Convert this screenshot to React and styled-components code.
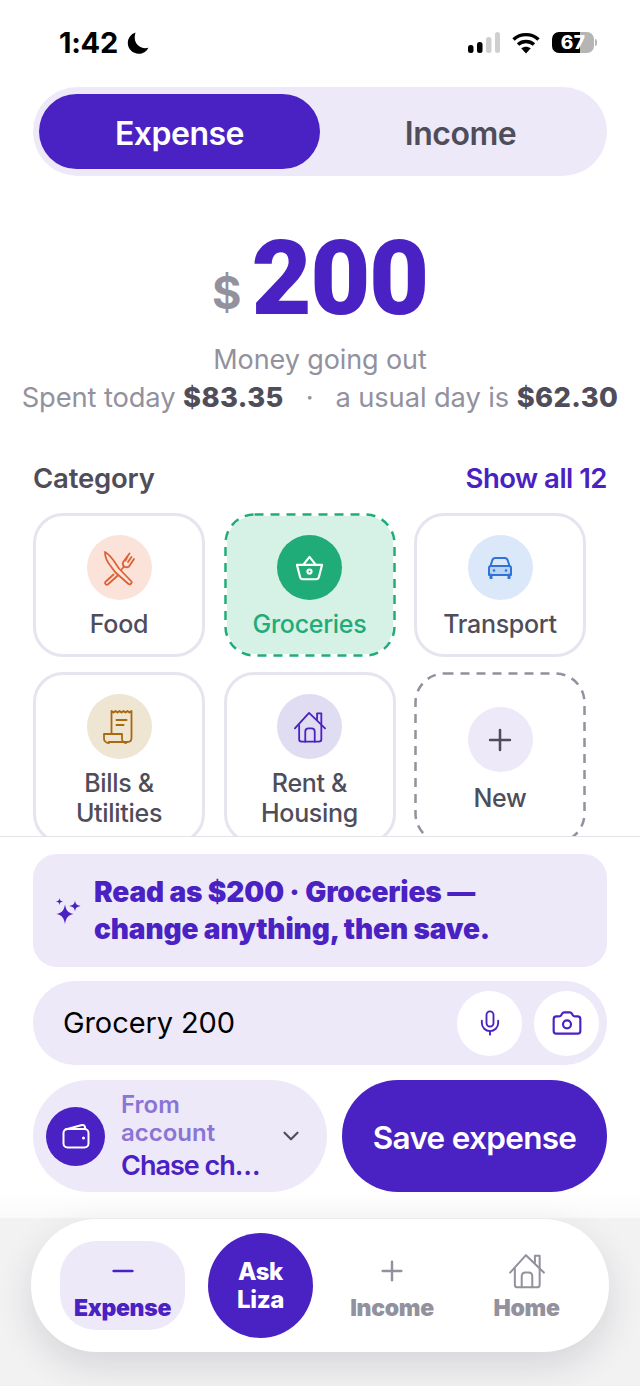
import React from "react";
import styled, { createGlobalStyle } from "styled-components";
import { Mic, Camera, ChevronDown, Plus, Minus } from "lucide-react";

const Global = createGlobalStyle`
  html, body { margin: 0; padding: 0; background: #fff; }
  * { box-sizing: border-box; }
`;
const purple = "#4a21c2";
const lilac = "#eee9f8";
const ink = "#4f4d5a";
const muted = "#92919d";

const Page = styled.div`
  width: 640px; height: 1386px; overflow: hidden; display: flex; flex-direction: column;
  font-family: Inter, "Liberation Sans", sans-serif; background: #fff; color: ${ink};
`;
const StatusBar = styled.div`
  height: 87px; flex: none; display: flex; align-items: center; justify-content: space-between;
  padding: 0 46px 2px 59px; color: #000;
`;
const Clock = styled.div`
  display: flex; align-items: center; gap: 8px; font-size: 29px; font-weight: 700; letter-spacing: -0.3px;
`;
const StatusIcons = styled.div` display: flex; align-items: center; gap: 12px; `;
const Battery = styled.div`
  width: 42px; height: 21px; border-radius: 7px; display: flex; align-items: center; justify-content: center; position: relative;
  background: linear-gradient(90deg, #000 67%, #b5b5b5 67%); color: #fff; font-size: 19px; font-weight: 800; letter-spacing: .5px;
  &::after {
    content: ""; position: absolute; right: -3px; top: 7px; width: 2px; height: 7px; border-radius: 0 2px 2px 0; background: #b5b5b5;
  }
`;
const Main = styled.div` flex: 1; min-height: 0; overflow: hidden; `;
const Segment = styled.div`
  margin: 0 33px; height: 89px; background: ${lilac}; border-radius: 45px; padding: 7px 6px 7px 6px;
  display: grid; grid-template-columns: 281px 1fr;
`;
const SegmentItem = styled.div`
  display: flex; align-items: center; justify-content: center; border-radius: 38px; padding-top: 3px;
  font-size: 32px; font-weight: 600; letter-spacing: -0.5px;
  background: ${p => (p.$active ? purple : "transparent")};
  color: ${p => (p.$active ? "#fff" : ink)};
`;
const Hero = styled.div`
  display: flex; flex-direction: column; align-items: center; margin-top: 45px;
`;
const Amount = styled.div`
  display: flex; align-items: baseline; justify-content: center; gap: 10px; height: 112px; line-height: 112px;
`;
const Currency = styled.span` font-size: 45px; font-weight: 700; color: ${muted}; position: relative; top: -3px; `;
const Digits = styled.span`
  font-family: Roboto, Inter, sans-serif; font-size: 104px; font-weight: 900; color: ${purple}; letter-spacing: -1.5px;
  position: relative; top: 2px;
`;
const Caption = styled.div` margin-top: 9px; font-size: 27px; line-height: 36px; color: ${muted}; letter-spacing: -0.1px; `;
const Stats = styled.div`
  margin-top: 1px; font-size: 27.3px; line-height: 38px; color: ${muted}; white-space: nowrap; letter-spacing: -0.1px;
  b { color: ${ink}; font-weight: 800; letter-spacing: .4px; }
`;
const Dot = styled.span` margin: 0 22px; `;
const SectionHead = styled.div`
  display: flex; justify-content: space-between; align-items: center; margin: 41px 33px 0 33px; height: 40px;
`;
const SectionTitle = styled.div` font-size: 27.5px; font-weight: 600; color: ${ink}; letter-spacing: -0.2px; `;
const ShowAll = styled.div` font-size: 27.5px; font-weight: 600; color: ${purple}; letter-spacing: -0.5px; `;
const Grid = styled.div`
  margin: 15px 0 0 33px; width: 553px; display: grid; grid-template-columns: repeat(3, 172px);
  column-gap: 18.5px; row-gap: 15px; grid-template-rows: 144px 172px;
`;
const Card = styled.div`
  border-radius: 30px; display: flex; flex-direction: column; align-items: center; position: relative;
  padding-top: 19px; text-align: center;
  border: 3px solid ${p => (p.$dashed ? "transparent" : "#e6e5ef")};
  background: ${p => p.$bg || "#fff"};
  background-clip: ${p => (p.$dashed ? "padding-box" : "border-box")};
  ${p => p.$center && "justify-content: flex-start; padding-top: 32px;"}
`;
const DashFrame = styled.svg`
  position: absolute; left: -3px; top: -3px; width: calc(100% + 6px); height: calc(100% + 6px); overflow: visible; pointer-events: none;
`;
const IconCircle = styled.div`
  width: 65px; height: 65px; flex: none; border-radius: 50%; display: flex; align-items: center; justify-content: center;
  background: ${p => p.$bg}; color: ${p => p.$fg};
`;
const CardLabel = styled.div`
  margin-top: ${p => (p.$center ? 11 : 9)}px; font-size: 25px; line-height: 30px; font-weight: 500; letter-spacing: -0.3px;
  color: ${p => p.$color || ink};
`;
const Sheet = styled.div`
  flex: none; height: 382px; border-top: 1px solid #e4e3ea; padding: 17px 33px 0; display: flex; flex-direction: column;
  background: linear-gradient(#fff 92%, #fafafa);
`;
const Hint = styled.div`
  height: 113px; background: ${lilac}; border-radius: 24px; display: flex; align-items: center; gap: 13px; padding: 0 0 0 22px;
`;
const HintText = styled.div` font-size: 28px; line-height: 37px; font-weight: 900; color: ${purple}; letter-spacing: -0.12px; white-space: nowrap; `;
const InputRow = styled.div`
  margin-top: 14px; height: 84px; background: ${lilac}; border-radius: 42px; display: flex; align-items: center;
  padding: 0 8px 0 30px; gap: 12px;
`;
const InputText = styled.div` flex: 1; font-size: 29px; line-height: 34px; color: #000; font-weight: 400; letter-spacing: -0.1px; `;
const RoundBtn = styled.div`
  width: 65px; height: 65px; border-radius: 50%; background: #fff; display: flex; align-items: center; justify-content: center; color: ${purple};
`;
const ActionRow = styled.div` margin-top: 15px; height: 112px; display: flex; gap: 15px; `;
const Account = styled.div`
  width: 294px; flex: none; background: ${lilac}; border-radius: 56px; display: flex; align-items: center; padding: 0 23px 0 13px;
`;
const WalletDot = styled.div`
  width: 59px; height: 59px; border-radius: 50%; background: ${purple}; color: #fff; flex: none;
  display: flex; align-items: center; justify-content: center;
`;
const AccountText = styled.div` margin-left: 16px; margin-top: 3px; flex: 1; color: ${purple}; `;
const AccountLabel = styled.div` font-size: 24px; line-height: 28px; font-weight: 600; color: #8a75d6; `;
const AccountName = styled.div` font-size: 27px; line-height: 36px; margin-top: 1px; font-weight: 600; letter-spacing: -1px; white-space: nowrap; `;
const Save = styled.div`
  flex: 1; background: ${purple}; color: #fff; border-radius: 56px; display: flex; align-items: center; justify-content: center; padding-top: 3px;
  font-size: 31.5px; font-weight: 600; letter-spacing: -0.7px;
`;
const NavZone = styled.div` flex: none; height: 168px; background: #f2f2f3; padding: 1px 31px 0; `;
const Nav = styled.div`
  height: 133px; border-radius: 66px; background: #fff; display: flex; align-items: center; position: relative;
  box-shadow: 0 14px 36px rgba(40, 40, 60, .14); padding: 0 0 0 29px;
`;
const NavItem = styled.div`
  width: ${p => p.$w}px; height: 89px; flex: none; border-radius: 36px; display: flex; flex-direction: column; align-items: center;
  justify-content: flex-end; padding-bottom: 9px;
  background: ${p => (p.$active ? lilac : "transparent")};
  color: ${p => (p.$active ? purple : muted)};
`;
const NavLabel = styled.div` font-size: 23px; line-height: 26px; font-weight: 900; letter-spacing: -0.3px; white-space: nowrap; `;
const NavIcon = styled.div` height: 44px; margin-top: -4px; padding-bottom: 4px; display: flex; align-items: center; justify-content: center; `;
const Ask = styled.div`
  width: 105px; height: 105px; flex: none; margin: 0 17px 0 23px; border-radius: 50%; background: ${purple}; color: #fff;
  display: flex; align-items: center; justify-content: center; text-align: center;
  font-size: 24px; line-height: 28px; font-weight: 800; letter-spacing: -0.4px;
`;

const Moon = () => (
  <svg width="24" height="24" viewBox="0 0 24 24"><path fill="#000" d="M9.500 1.500C5 3 1.800 7.200 1.800 12.100c0 6 4.900 10.700 10.900 10.700 4.300 0 8-2.500 9.700-6.100-1 .3-2 .5-3.100.5-6 0-10.600-4.700-10.600-10.600 0-1.900.3-3.500.8-5.100z" /></svg>
);
const Signal = () => (
  <svg width="32" height="21" viewBox="0 0 32 21">
    <rect x="0" y="13" width="5.500" height="8" rx="2.500" fill="#000" />
    <rect x="9" y="10" width="5.500" height="11" rx="2.500" fill="#000" />
    <rect x="18" y="5" width="5.500" height="16" rx="2.500" fill="#cfcfcf" />
    <rect x="27" y="0" width="5" height="21" rx="2.500" fill="#cfcfcf" />
  </svg>
);
const Wifi = () => (
  <svg width="28" height="22" viewBox="0 0 28 22" fill="none" stroke="#000" strokeWidth="3.400">
    <path d="M1.500 7.500C8.500 1 19.500 1 26.500 7.500" />
    <path d="M6 12.500c4.500-4 11.500-4 16 0" />
    <path fill="#000" stroke="none" d="M14 21.500l-4.800-5.300c2.800-2.100 6.800-2.100 9.600 0z" />
  </svg>
);
const FoodIcon = () => (
  <svg width="34" height="38" viewBox="0 0 34 38" fill="none" stroke="currentColor" strokeWidth="1.800" strokeLinejoin="round" strokeLinecap="round">
    <path d="M3 3c6 3 11 12 14 16.500l12.500 13c1 1.500-1.500 3.500-3 2.500L13 23 9 17.500C6 14 3 8 3 3z" />
    <path d="M11.500 25.500L3.300 33c-1 1.500 1 3.500 2.500 2.500l10-9" />
    <path d="M19.500 20.500l2.500-3c1.800 1 3.500 1 5 0l5-7.500" />
    <path d="M22 17.500c-1.500-1.500-1.500-3.500-.5-5l6-8M26 6.500l-2.500 5M29.500 8l-3.500 5" />
  </svg>
);
const BasketIcon = () => (
  <svg width="29" height="26" viewBox="0 0 32 29" fill="none" stroke="currentColor" strokeWidth="2.400" strokeLinejoin="round" strokeLinecap="round">
    <path d="M9 11L16 2l7 9" />
    <path d="M2 11h28l-3.500 13.500c-.4 1.500-1.500 2.500-3 2.500h-15c-1.500 0-2.600-1-3-2.500z" />
    <circle cx="16" cy="18.500" r="2.300" />
  </svg>
);
const CarIcon = () => (
  <svg width="26" height="22" viewBox="0 0 26 22" fill="none" stroke="currentColor" strokeWidth="2" strokeLinejoin="round" strokeLinecap="round">
    <path d="M3.500 9l1.700-5.500C5.700 2 6.800 1 8.300 1h9.400c1.500 0 2.600 1 3.100 2.500L22.500 9" />
    <path d="M2 11c0-1.200.8-2 2-2h18c1.200 0 2 .8 2 2v7H2z" fill="currentColor" fillOpacity=".18" />
    <path d="M4 18v3M22 18v3" strokeWidth="3" />
    <circle cx="7" cy="13.500" r="1.300" fill="currentColor" stroke="none" />
    <circle cx="19" cy="13.500" r="1.300" fill="currentColor" stroke="none" />
  </svg>
);
const ReceiptIcon = () => (
  <svg width="34" height="36" viewBox="0 0 34 36" fill="none" stroke="currentColor" strokeWidth="1.800" strokeLinejoin="round" strokeLinecap="round">
    <path d="M9.500 25V2l2 1.500 2-1.500 2 1.500 2-1.500 2 1.500 2-1.500 2 1.500 2-1.500 2 1.500 2-1.500v27c0 2.500-1.800 4-4 4H7" />
    <path d="M7 34c-3 0-5-2-5-4.500V25h18v4.500c0 2.500 1.800 4.500 4 4.500" />
    <path d="M14.500 11h10M14.500 16h7" strokeWidth="2" />
  </svg>
);
const WalletIcon = () => (
  <svg width="28" height="26" viewBox="0 0 28 26" fill="none" stroke="currentColor" strokeWidth="2" strokeLinejoin="round" strokeLinecap="round">
    <rect x="1.500" y="6" width="25" height="18.500" rx="4" />
    <path d="M3.500 6.500L20 2c1.800-.4 3 .8 3 2.500V6" />
    <circle cx="21.500" cy="15" r="1.500" fill="currentColor" stroke="none" />
  </svg>
);
const HouseIcon = ({ size = 34, sw = 1.900 }) => (
  <svg width={size} height={size} viewBox="0 0 36 36" fill="none" stroke="currentColor" strokeWidth={sw} strokeLinejoin="round" strokeLinecap="round">
    <path d="M2 19.500L17 3l17 16.500" />
    <path d="M6.500 16v15c0 1.500 1 2.500 2.500 2.500h18.500c1.500 0 2.500-1 2.500-2.500V16" />
    <path d="M13 33.500V23c0-2 1.500-3.500 3.500-3.500h3c2 0 3.500 1.500 3.500 3.500v10.500" />
    <path d="M25.500 10V3.500H30v11" />
  </svg>
);
const Sparkles = () => (
  <svg width="26" height="28" viewBox="0 0 26 28" fill={purple}>
    <path d="M10 7.500c1.100 6 2.800 8 8.500 9.500-5.700 1.500-7.400 3.500-8.500 10-1.100-6.500-2.800-8.500-8.500-10 5.700-1.500 7.400-3.500 8.500-9.500z" />
    <path d="M20 3.500c.6 3.500 1.500 4.500 5.500 5.500-4 1-4.900 2-5.500 5.500-.6-3.500-1.500-4.500-5.500-5.500 4-1 4.900-2 5.500-5.500z" />
    <path d="M4.500 1c.4 2.400.9 3 3.500 3.500-2.600.5-3.100 1.100-3.500 3.500-.4-2.400-.9-3-3.500-3.500 2.600-.5 3.100-1.100 3.500-3.500z" />
  </svg>
);

const categories = [
  { label: ["Food"], bg: "#fce3d9", fg: "#de6136", icon: <FoodIcon /> },
  { label: ["Groceries"], bg: "#1fac78", fg: "#fff", icon: <BasketIcon />, dashed: "#1fac78", cardBg: "#d6f1e6", color: "#1fac78" },
  { label: ["Transport"], bg: "#dbe8f9", fg: "#2f73d8", icon: <CarIcon /> },
  { label: ["Bills &", "Utilities"], bg: "#eee5d3", fg: "#a8690f", icon: <ReceiptIcon /> },
  { label: ["Rent &", "Housing"], bg: "#e0dcf1", fg: purple, icon: <HouseIcon /> },
  { label: ["New"], bg: lilac, fg: ink, icon: <Plus size={34} strokeWidth={1.800} />, dashed: "#92919d", center: true },
];

export default function App() {
  return (
    <Page>
      <Global />
      <StatusBar>
        <Clock>1:42 <Moon /></Clock>
        <StatusIcons>
          <Signal />
          <Wifi />
          <Battery>67</Battery>
        </StatusIcons>
      </StatusBar>
      <Main>
        <Segment>
          <SegmentItem $active>Expense</SegmentItem>
          <SegmentItem>Income</SegmentItem>
        </Segment>
        <Hero>
          <Amount>
            <Currency>$</Currency>
            <Digits>200</Digits>
          </Amount>
          <Caption>Money going out</Caption>
          <Stats>Spent today <b>$83.35</b><Dot>·</Dot>a usual day is <b>$62.30</b></Stats>
        </Hero>
        <SectionHead>
          <SectionTitle>Category</SectionTitle>
          <ShowAll>Show all 12</ShowAll>
        </SectionHead>
        <Grid>
          {categories.map(c => (
            <Card key={c.label[0]} $dashed={c.dashed} $bg={c.cardBg} $center={c.center}>
              {c.dashed && (
                <DashFrame>
                  <rect x="1.500" y="1.500" width="169" height={c.center ? 169 : 141} rx="29" fill="none" stroke={c.dashed} strokeWidth="2.500" strokeDasharray="9 7" />
                </DashFrame>
              )}
              <IconCircle $bg={c.bg} $fg={c.fg}>{c.icon}</IconCircle>
              <CardLabel $color={c.color} $center={c.center}>{c.label.map(l => <div key={l}>{l}</div>)}</CardLabel>
            </Card>
          ))}
        </Grid>
      </Main>
      <Sheet>
        <Hint>
          <Sparkles />
          <HintText>Read as $200 · Groceries —<br />change anything, then save.</HintText>
        </Hint>
        <InputRow>
          <InputText>Grocery 200</InputText>
          <RoundBtn><Mic size={28} strokeWidth={1.600} /></RoundBtn>
          <RoundBtn><Camera size={32} strokeWidth={1.600} /></RoundBtn>
        </InputRow>
        <ActionRow>
          <Account>
            <WalletDot><WalletIcon /></WalletDot>
            <AccountText>
              <AccountLabel>From<br />account</AccountLabel>
              <AccountName>Chase ch…</AccountName>
            </AccountText>
            <ChevronDown size={26} strokeWidth={2} />
          </Account>
          <Save>Save expense</Save>
        </ActionRow>
      </Sheet>
      <NavZone>
        <Nav>
          <NavItem $active $w={125}>
            <NavIcon><Minus size={32} strokeWidth={2} /></NavIcon>
            <NavLabel>Expense</NavLabel>
          </NavItem>
          <Ask>Ask<br />Liza</Ask>
          <NavItem $w={124}>
            <NavIcon><Plus size={32} strokeWidth={1.800} /></NavIcon>
            <NavLabel>Income</NavLabel>
          </NavItem>
          <NavItem $w={145}>
            <NavIcon><HouseIcon size={38} sw={1.900} /></NavIcon>
            <NavLabel>Home</NavLabel>
          </NavItem>
        </Nav>
      </NavZone>
    </Page>
  );
}
